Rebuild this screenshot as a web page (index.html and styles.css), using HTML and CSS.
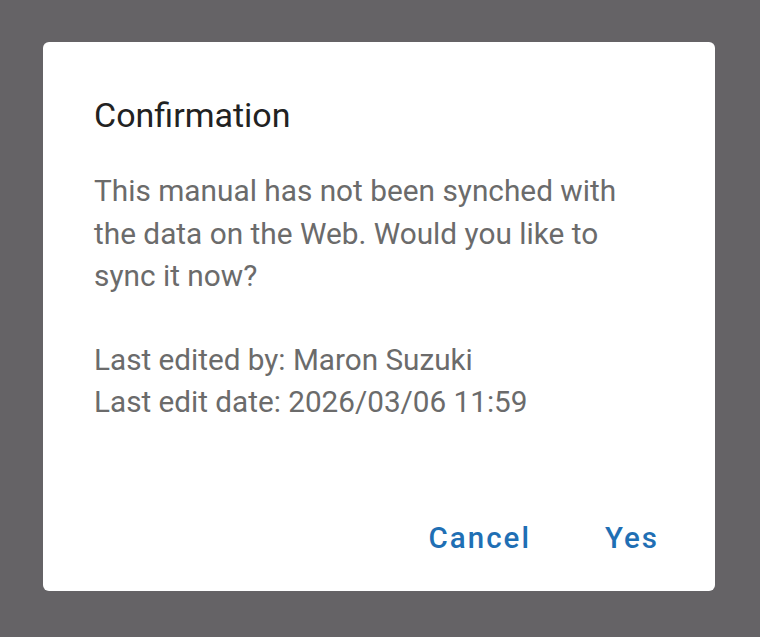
FILE: index.html
```html
<!DOCTYPE html>
<html>
<head>
<meta charset="utf-8">
<link rel="stylesheet" href="styles.css">
</head>
<body>
<div class="dialog">
  <h1 class="title">Confirmation</h1>
  <p class="message">This manual has not been synched with the data on the Web. Would you like to sync it now?</p>
  <p class="meta">Last edited by: Maron Suzuki<br>Last edit date: 2026/03/06 11:59</p>
  <div class="actions">
    <button class="btn">Cancel</button>
    <button class="btn">Yes</button>
  </div>
</div>
</body>
</html>
```
FILE: styles.css
```css
html, body {
  margin: 0;
  height: 100%;
}
body {
  background: #656366;
  font-family: Roboto, "Noto Sans", sans-serif;
  padding: 42px 0 0 43px;
  box-sizing: border-box;
}
.dialog {
  width: 672px;
  height: 549px;
  background: #ffffff;
  border-radius: 6px;
  box-sizing: border-box;
  padding: 56px 76px 0 51px;
  display: flex;
  flex-direction: column;
}
.title {
  margin: 0;
  font-size: 34px;
  font-weight: 400;
  line-height: 1;
  color: #222222;
}
.message {
  margin: 38px 0 0;
  font-size: 29.8px;
  line-height: 42.5px;
  color: #6b6b6b;
}
.meta {
  margin: 41px 0 0;
  font-size: 29.7px;
  line-height: 42.5px;
  color: #6b6b6b;
}
.actions {
  margin-top: auto;
  margin-bottom: 38px;
  margin-right: -20px;
  display: flex;
  justify-content: flex-end;
  gap: 74px;
}
.btn {
  border: none;
  background: none;
  padding: 0;
  font-family: Roboto, sans-serif;
  font-size: 29.5px;
  line-height: 1;
  font-weight: 500;
  letter-spacing: 2px;
  color: #1f6fb4;
}
```
